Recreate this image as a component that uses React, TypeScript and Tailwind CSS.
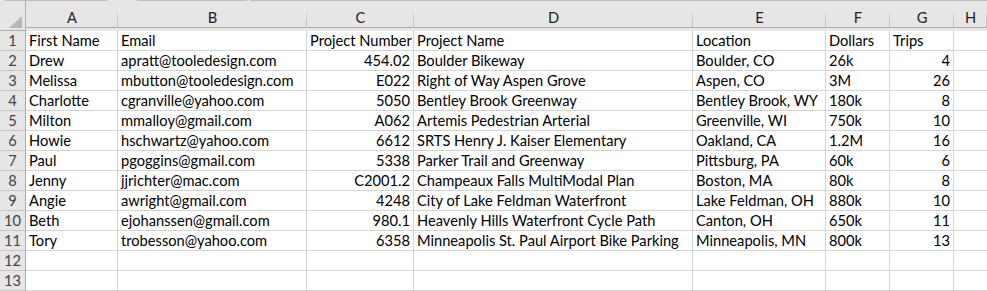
import type { ReactNode } from 'react';

const columns = ['A', 'B', 'C', 'D', 'E', 'F', 'G', 'H'];

type Row = [string, string, string, string, string, string, string];

const rows: Row[] = [
  ['First Name', 'Email', 'Project Number', 'Project Name', 'Location', 'Dollars', 'Trips'],
  ['Drew', 'apratt@tooledesign.com', '454.02', 'Boulder Bikeway', 'Boulder, CO', '26k', '4'],
  ['Melissa', 'mbutton@tooledesign.com', 'E022', 'Right of Way Aspen Grove', 'Aspen, CO', '3M', '26'],
  ['Charlotte', 'cgranville@yahoo.com', '5050', 'Bentley Brook Greenway', 'Bentley Brook, WY', '180k', '8'],
  ['Milton', 'mmalloy@gmail.com', 'A062', 'Artemis Pedestrian Arterial', 'Greenville, WI', '750k', '10'],
  ['Howie', 'hschwartz@yahoo.com', '6612', 'SRTS Henry J. Kaiser Elementary', 'Oakland, CA', '1.2M', '16'],
  ['Paul', 'pgoggins@gmail.com', '5338', 'Parker Trail and Greenway', 'Pittsburg, PA', '60k', '6'],
  ['Jenny', 'jjrichter@mac.com', 'C2001.2', 'Champeaux Falls MultiModal Plan', 'Boston, MA', '80k', '8'],
  ['Angie', 'awright@gmail.com', '4248', 'City of Lake Feldman Waterfront', 'Lake Feldman, OH', '880k', '10'],
  ['Beth', 'ejohanssen@gmail.com', '980.1', 'Heavenly Hills Waterfront Cycle Path', 'Canton, OH', '650k', '11'],
  ['Tory', 'trobesson@yahoo.com', '6358', 'Minneapolis St. Paul Airport Bike Parking', 'Minneapolis, MN', '800k', '13'],
  ['', '', '', '', '', '', ''],
  ['', '', '', '', '', '', ''],
];

// columns C and G hold numbers, right aligned below the header row
const rightAligned = [false, false, true, false, false, false, true];

function ColumnHeader({ children }: { children: ReactNode }) {
  return (
    <div className="relative border-b border-[#ababab] pt-[8px] text-center leading-[18px] text-[#222] after:absolute after:right-0 after:top-[11px] after:bottom-0 after:w-px after:bg-[linear-gradient(#d8d8d8,#bdbdbd)]">
      {children}
    </div>
  );
}

export default function App() {
  return (
    <div className="h-[291px] w-[987px] overflow-hidden bg-white font-['Lato','Carlito','Liberation_Sans',sans-serif] text-[14.67px] text-black">
      <div className="flex h-px bg-[#e6e6e6]">
        <div className="ml-[5px] w-[102px] bg-[#bdbdbd]" />
        <div className="ml-[30px] w-[110px] bg-[#bdbdbd]" />
        <div className="ml-[3px] flex-1 bg-[#bdbdbd]" />
      </div>
      <div className="grid grid-cols-[26px_92px_189px_107px_279px_133px_64px_64px_1fr] grid-rows-[30px_repeat(13,20px)]">
        <div className="flex items-end justify-end border-r border-b border-[#ababab] bg-[#e6e6e6] pr-[3px] pb-[2px]">
          <svg width="13" height="12" viewBox="0 0 13 12">
            <polygon points="13,0 13,12 0,12" fill="#b7b7b7" />
          </svg>
        </div>
        {columns.map((col) => (
          <div key={col} className="bg-[#e6e6e6]">
            <ColumnHeader>{col}</ColumnHeader>
          </div>
        ))}
        {rows.map((row, r) => (
          <RowCells key={r} index={r + 1} row={row} />
        ))}
      </div>
    </div>
  );
}

function RowCells({ index, row }: { index: number; row: Row }) {
  return (
    <>
      <div className="border-r border-b border-r-[#ababab] border-b-[#c9c9c9] bg-[#e6e6e6] text-center leading-[19px] text-[#444]">
        {index}
      </div>
      {row.map((value, c) => (
        <div
          key={c}
          className={`overflow-visible whitespace-nowrap border-r border-b border-[#d4d4d4] px-[3px] leading-[19px] ${
            rightAligned[c] && index > 1 ? 'text-right' : 'text-left'
          }`}
        >
          {value}
        </div>
      ))}
      <div className="border-b border-[#d4d4d4]" />
    </>
  );
}
